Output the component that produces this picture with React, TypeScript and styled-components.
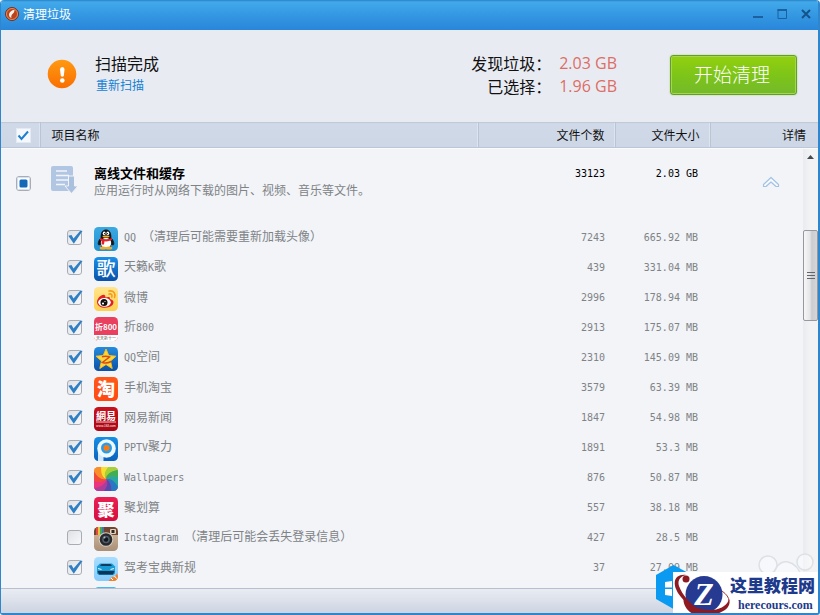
import React, { useState } from 'react';
import styled, { createGlobalStyle, css } from 'styled-components';

const CJK = "'Noto Sans CJK SC', sans-serif";
const MONO = "'DejaVu Sans Mono', 'Noto Sans CJK SC', monospace";

const Global = createGlobalStyle`
  *, *::before, *::after { box-sizing: border-box; }
  body { margin: 0; font-family: ${CJK}; font-size: 12px; color: #111; }
  button, input { font: inherit; margin: 0; }
`;

const Window = styled.div`
  display: flex;
  flex-direction: column;
  height: 100vh;
  overflow: hidden;
  background: #f2f4f8;
  border: solid #2f86cc;
  border-width: 0 2px 2px 1px;
  border-radius: 4px 4px 3px 3px;
  position: relative;
`;

const TitleBar = styled.header`
  display: flex;
  align-items: center;
  flex: none;
  height: 30px;
  padding: 0 0 3px 4px;
  background: linear-gradient(#2a83c8 0, #42a9ea 2px, #3498e2 50%, #2986da 100%);
`;

const WindowTitle = styled.h1`
  flex: 1;
  margin: 0 0 0 4px;
  font-size: 12px;
  line-height: 18px;
  font-weight: 400;
  color: #fff;
`;

const WindowButton = styled.button`
  display: flex;
  align-items: center;
  justify-content: center;
  width: 24px;
  height: 24px;
  padding: 0;
  border: 0;
  background: none;
`;

const Summary = styled.section`
  display: flex;
  align-items: center;
  flex: none;
  height: 92px;
  padding: 0 21px 4px 45px;
  background: #e9ebf3;
`;

const Status = styled.div`
  flex: 1;
  margin-left: 17px;
`;

const StatusTitle = styled.h2`
  margin: 0;
  font-size: 16px;
  line-height: 22px;
  font-weight: 400;
`;

const Rescan = styled.a`
  display: block;
  font-size: 12px;
  line-height: 22px;
  padding-left: 1px;
  color: #1581d2;
  text-decoration: none;
`;

const Totals = styled.dl`
  display: grid;
  grid-template-columns: auto auto;
  column-gap: 8px;
  margin: 2px 53px 0 0;
  line-height: 23px;
  font-size: 16px;
  dt { text-align: right; }
  dd { margin: 0; color: #dc6e64; font-family: 'Open Sans', sans-serif; }
`;

const CleanButton = styled.button`
  width: 127px;
  height: 40px;
  padding: 0 3px 2px 0;
  margin-top: 1px;
  border: 1px solid #62a022;
  border-radius: 3px;
  background: linear-gradient(#93d00e, #7cc41a 55%, #74b92b);
  box-shadow: inset 0 0 0 1px #a5d653, 0 0 2px #a9cc86;
  color: #fff;
  font-size: 19px;
  line-height: 28px;
  font-weight: 300;
`;

const Table = styled.table`
  width: 100%;
  table-layout: fixed;
  border-collapse: collapse;
  border-spacing: 0;
`;

const HeadTable = styled(Table)`
  flex: none;
  background: linear-gradient(#cbd4e1 0, #d0d9e7 2px, #cdd6e5);
  border-top: 1px solid #c0cad9;
  border-bottom: 1px solid #bbc6d6;
`;

const HeadCell = styled.th<{ $align?: 'left' | 'right' | 'center'; $last?: boolean }>`
  height: 25px;
  padding: 0 10px 0 11px;
  text-align: ${(p) => p.$align ?? 'right'};
  font-weight: 400;
  line-height: 18px;
  ${(p) => p.$last && css`
    padding-right: 12px;
  `}
  ${(p) => !p.$last && css`
    border-right: 1px solid #bac4d4;
    box-shadow: inset -1px 0 #dde4ee;
  `}
  ${(p) => p.$align === 'center' && css`
    padding: 0 0 2px 6px;
  `}
`;

const Body = styled.main`
  display: flex;
  flex: 1;
  min-height: 0;
  overflow: hidden;
  border-top: 1px solid #fafbfd;
`;

const ListPane = styled.div`
  flex: 1;
  overflow: hidden;
`;

const GroupRow = styled.tr`
  height: 74px;
  td { padding: 0; vertical-align: top; }
`;

const ItemRow = styled.tr`
  height: 30px;
  color: #808386;
  td { padding: 0; }
`;

const GroupCheckCell = styled.td`
  && { padding: 24px 0 0 15px; }
`;

const GroupInfo = styled.div`
  display: flex;
  gap: 16px;
  padding: 15px 0 0 11px;
  svg { margin-top: 2px; flex: none; }
`;

const GroupName = styled.h3`
  margin: 0;
  font-size: 13px;
  line-height: 18px;
  font-weight: 700;
  color: #000;
`;

const GroupNote = styled.p`
  margin: 0;
  line-height: 16px;
  color: #808386;
  white-space: nowrap;
`;

const NumberCell = styled.td<{ $edge: number; $strong?: boolean }>`
  font-family: ${MONO};
  font-size: 10px;
  line-height: 18px;
  text-align: right;
  white-space: pre;
  && {
    padding-right: ${(p) => p.$edge}px;
    ${(p) => p.$strong && css`padding-top: 16px; color: #000;`}
  }
`;

const CollapseCell = styled.td`
  text-align: center;
  && { padding: 27px 0 0 29px; }
`;

const PlainButton = styled.button`
  display: inline-flex;
  padding: 0;
  border: 0;
  background: none;
`;

const ItemLabel = styled.label`
  display: flex;
  align-items: center;
  padding-left: 66px;
  height: 30px;
  line-height: 18px;
  white-space: nowrap;
  svg { overflow: visible; }
`;

const IconSlot = styled.span`
  display: flex;
  margin: 1px 6px 0 12px;
`;

const ItemName = styled.span`
  padding-bottom: 2px;
  white-space: pre;
`;

const Latin = styled.span`
  font-family: ${MONO};
  font-size: 10px;
`;

const CheckWrap = styled.span`
  position: relative;
  display: inline-flex;
  width: 15px;
  height: 15px;
  vertical-align: middle;
  svg {
    position: absolute;
    inset: 0;
    overflow: visible;
    pointer-events: none;
    display: none;
  }
  input:checked + svg { display: block; }
`;

const ItemCheck = styled.span`
  display: flex;
  padding-bottom: 2px;
`;

const CheckInput = styled.input<{ $plain?: boolean }>`
  appearance: none;
  width: 15px;
  height: 15px;
  border: 1px solid ${(p) => (p.$plain ? '#e4eaf2' : '#a9adb3')};
  border-radius: ${(p) => (p.$plain ? 0 : 3)}px;
  background: ${(p) => (p.$plain ? '#f5f8fc' : 'linear-gradient(135deg, #dfe2e6, #f7f8fa)')};
`;

const Scrollbar = styled.div`
  display: flex;
  flex-direction: column;
  align-items: center;
  flex: none;
  width: 15px;
  background: linear-gradient(90deg, #e9ebee, #f2f3f5 50%);
`;

const ScrollUp = styled(PlainButton)`
  justify-content: center;
  align-items: center;
  width: 15px;
  height: 16px;
`;

const Thumb = styled.div`
  display: flex;
  align-items: center;
  justify-content: center;
  width: 15px;
  height: 91px;
  margin-top: 65px;
  border: 1px solid #95989e;
  border-radius: 2px;
  background: linear-gradient(90deg, #f6f6f7, #e5e6e8 45%, #cbccd0 60%, #d5d6da);
`;

const Footer = styled.footer`
  flex: none;
  height: 25px;
  border-top: 1px solid #b8c0cd;
  background: linear-gradient(#e9ecf3, #cdd4e1);
`;

const Badge = styled.div`
  position: absolute;
  z-index: 2;
  right: -2px;
  bottom: -2px;
`;

const HexMark = styled.svg`
  position: absolute;
  left: -17px;
  top: -7px;
  z-index: -1;
`;

const PawMark = styled.svg`
  position: absolute;
  right: 6px;
  top: -20px;
  z-index: -1;
`;

const BadgePlate = styled.div`
  display: flex;
  width: 147px;
  height: 43px;
  background: #fff;
`;

const BadgeText = styled.div`
  flex: 1;
  color: #1d3a8c;
  white-space: nowrap;
`;

const BadgeName = styled.div`
  font-size: 17px;
  line-height: 26px;
  font-weight: 900;
`;

const BadgeSite = styled.div`
  font-family: 'Liberation Serif', serif;
  font-size: 12px;
  line-height: 14px;
  font-weight: 700;
  padding-left: 8px;
`;

function Check({ label, initial = true, plain, partial }: { label?: string; initial?: boolean; plain?: boolean; partial?: boolean }) {
  const [on, setOn] = useState(initial);
  return (
    <CheckWrap>
      <CheckInput type="checkbox" aria-label={label} checked={on} $plain={plain} onChange={(e) => setOn(e.target.checked)} />
      {partial ? (
        <svg width="15" height="15" viewBox="0 0 15 15"><rect x="1.5" y="1.5" width="12" height="12" rx="1" fill="#fafcff" stroke="#d3e2f2" /><rect x="3.500" y="3.500" width="8" height="8" rx="1.500" fill="#1568b8" /></svg>
      ) : (
        <svg width="15" height="15" viewBox="0 0 15 15">
          {plain
            ? <path d="M2.500 7.500 5.500 11 12 3.500" fill="none" stroke="#1f80cf" strokeWidth="2" />
            : <path d="M1.300 5.800 4.500 5 6.500 8.500 13.500 .5 15.500 1 6.800 13.800Z" fill="#2e7fc4" />}
        </svg>
      )}
    </CheckWrap>
  );
}

type IconKind = 'qq' | 'song' | 'weibo' | 'zhe' | 'qzone' | 'tao' | 'netease' | 'pptv' | 'wall' | 'ju' | 'insta' | 'car' | 'next';

const plates: Record<IconKind, [string, string]> = {
  qq: ['#3aa9e3', '#2491d0'], song: ['#1a90e8', '#0b51a8'], weibo: ['#ffe58c', '#ffd04e'], zhe: ['#e8405e', '#e8405e'],
  qzone: ['#248bdf', '#0b50a6'], tao: ['#ff5a19', '#ff4810'], netease: ['#c8101c', '#a90815'], pptv: ['#168fe5', '#0a62bd'],
  wall: ['#f1a12c', '#e83f62'], ju: ['#ea2052', '#d60e40'], insta: ['#d9c1a1', '#a98f78'], car: ['#a9ddff', '#86cafa'], next: ['#45b8f3', '#2794dd'],
};

const glyphs: Partial<Record<IconKind, { text: string; size: number; weight: number }>> = {
  song: { text: '歌', size: 19, weight: 500 },
  tao: { text: '淘', size: 18, weight: 900 },
  ju: { text: '聚', size: 17, weight: 900 },
};

const wheel = ['#f6e02d', '#a6d039', '#3fae54', '#27a9a0', '#2779c5', '#5a48b0', '#b03c9a', '#ec3580', '#f04b3a', '#f98f2b'];

function wedge(i: number) {
  const point = (angle: number, radius: number) => [12 + Math.cos(angle) * radius, 12 + Math.sin(angle) * radius].map((n) => n.toFixed(2)).join(' ');
  const a = (i * Math.PI) / 5 - 1.8;
  const b = a + Math.PI / 5 + 0.04;
  return `M12 12Q${point(a - 1, 8)} ${point(a, 19)}L${point(b, 19)}Q${point(b - 1, 8)} 12 12Z`;
}

function Artwork({ kind }: { kind: IconKind }) {
  const t = { fontFamily: CJK, fill: '#fff', textAnchor: 'middle' as const };
  switch (kind) {
    case 'qq':
      return <>
        <path d="M7 11C3.800 14 3.800 18 5 18L7.500 16.500M17 11C20.200 14 20.200 18 19 18L16.500 16.500" fill="#15171b" stroke="#15171b" />
        <ellipse cx="12" cy="15" rx="6.300" ry="6.500" fill="#15171b" /><ellipse cx="12" cy="16" rx="5.200" ry="5.200" fill="#fff" />
        <ellipse cx="9" cy="21" rx="3.300" ry="1.500" fill="#f6ac21" /><ellipse cx="15" cy="21" rx="3.300" ry="1.500" fill="#f6ac21" />
        <path d="M6.700 11C5.500-.5 18.500-.5 17.300 11Z" fill="#15171b" /><ellipse cx="10.200" cy="6.300" rx="1.400" ry="1.900" fill="#fff" /><ellipse cx="13.800" cy="6.300" rx="1.400" ry="1.900" fill="#fff" />
        <circle cx="10.700" cy="6.600" r=".7" /><circle cx="13.300" cy="6.600" r=".7" /><ellipse cx="12" cy="9.500" rx="3.500" ry="1.100" fill="#f8b321" />
        <path d="M6 11Q12 13.500 18 11L18 13Q14 14.800 10.500 14.300L10 17.500H7.500L7.800 13.900 6 13Z" fill="#e32126" />
      </>;
    case 'weibo':
      return <>
        <path d="M3 15C3 11 8 6.500 10.500 8 12 9 11 10.500 11.500 10.500 14 9.500 16.500 9.500 16 12 19.500 13 20.500 15 18.500 18 14 22.500 3 21.500 3 15Z" fill="#e02228" />
        <ellipse cx="10.500" cy="15.300" rx="6.300" ry="4.400" fill="#fff" /><circle cx="10" cy="15.500" r="3.500" fill="#17100d" /><circle cx="9" cy="16.500" r="1.100" fill="#fff" /><circle cx="11" cy="14.500" r=".6" fill="#fff" />
        <path d="M15 4C19.500 3 22 7 20.500 10.500M15 7C17.500 6.500 18.500 8 17.800 10" fill="none" stroke="#f49b1e" strokeWidth="1.600" strokeLinecap="round" />
      </>;
    case 'zhe':
      return <><rect y="18" width="24" height="6" fill="#fff" /><text x="12" y="12.500" fontSize="8" fontWeight="700" {...t}>折800</text><text x="12" y="22.500" fontSize="4" {...t} fill="#444">天天折十一</text></>;
    case 'qzone':
      return <><path d="M12 2 14.800 8.500 22 9.200 16.500 14 18.200 21.500 12 17.500 5.800 21.500 7.500 14 2 9.200 9.200 8.500Z" fill="#ffd73a" stroke="#f8bd1c" strokeLinejoin="round" /><path d="M8 9.800Q12 8.800 15.500 10L8.500 15.500Q13 16.800 17 14.500" fill="none" stroke="#d94c18" strokeWidth="1.500" /></>;
    case 'netease':
      return <><text x="12" y="12.500" fontSize="10" fontWeight="700" {...t}>網易</text><path d="M2 15H22" stroke="#fff" strokeWidth=".8" /><text x="12" y="19.500" fontSize="3" {...t}>www.163.com</text></>;
    case 'pptv':
      return <><path d="M4 10V24H9.500V18" fill="#cfe8fb" /><circle cx="12.500" cy="11.500" r="9.300" fill="#eef8ff" /><circle cx="12.500" cy="11" r="5.500" fill="#269fe8" /><circle cx="12.500" cy="11" r="3" fill="#ff7810" /></>;
    case 'wall':
      return <>{wheel.map((color, i) => <path key={color} d={wedge(i)} fill={color} />)}</>;
    case 'insta':
      return <><rect width="24" height="8" fill="#71452f" /><path d="M3 0V8" stroke="#e14c42" strokeWidth="2" /><path d="M5 0V8" stroke="#eac33f" strokeWidth="2" /><path d="M7 0V8" stroke="#46a85c" strokeWidth="2" /><path d="M9 0V8" stroke="#3e83c5" strokeWidth="1.500" /><rect x="16" y="2" width="6" height="5" rx="1" fill="#e0d5c4" /><rect x="17.500" y="3" width="3" height="3" fill="#33251f" /><circle cx="12" cy="12.500" r="7.300" fill="#d4cdc3" /><circle cx="12" cy="12.500" r="6.300" fill="#27292d" /><circle cx="12" cy="12.500" r="3.800" fill="#515c69" /><circle cx="12" cy="12.500" r="2.200" fill="#11151d" /><circle cx="10.500" cy="10.500" r="1" fill="#aeb9c5" /></>;
    case 'car':
      return <><path d="M3 9.500 6 6.500H18L21 9.500V16.500L19 18H5L3 16.500Z" fill="#159bd5" /><path d="M6 9 7.500 7H16.500L18 9Z" fill="#123d60" /><path d="M3.500 14H20.500L19 17.500H5Z" fill="#0c3557" /><path d="M4 11.500 7.500 12.500M20 11.500 16.500 12.500" stroke="#dff7ff" strokeWidth="1.200" /><path d="M14.500 24 18.500 19.500 20 20.500 23 16.500 24 19V24Z" fill="#ee822c" /><path d="M17 21 19 23M20.500 19 22.500 21.500" stroke="#fff" /></>;
    default:
      return null;
  }
}

function AppIcon({ kind }: { kind: IconKind }) {
  const [from, to] = plates[kind];
  const glyph = glyphs[kind];
  return (
    <svg width="24" height="24" viewBox="0 0 24 24" aria-hidden="true">
      <defs>
        <linearGradient id={`plate-${kind}`} x2="0" y2="1"><stop stopColor={from} /><stop offset="1" stopColor={to} /></linearGradient>
        <clipPath id={`clip-${kind}`}><rect width="24" height="24" rx="4.500" /></clipPath>
      </defs>
      {glyph ? (
        <>
          <rect width="24" height="24" rx="4.500" fill={`url(#plate-${kind})`} />
          <text x="12" y="18.500" textAnchor="middle" fontFamily={CJK} fontSize={glyph.size} fontWeight={glyph.weight} fill="#fff">{glyph.text}</text>
        </>
      ) : (
        <g clipPath={`url(#clip-${kind})`}><rect width="24" height="24" fill={`url(#plate-${kind})`} /><Artwork kind={kind} /></g>
      )}
    </svg>
  );
}

interface Item { icon: IconKind; name: string; count: string; size: string; off?: boolean }

const items: Item[] = [
  { icon: 'qq', name: 'QQ （清理后可能需要重新加载头像）', count: '7243', size: '665.92 MB' },
  { icon: 'song', name: '天籁K歌', count: '439', size: '331.04 MB' },
  { icon: 'weibo', name: '微博', count: '2996', size: '178.94 MB' },
  { icon: 'zhe', name: '折800', count: '2913', size: '175.07 MB' },
  { icon: 'qzone', name: 'QQ空间', count: '2310', size: '145.09 MB' },
  { icon: 'tao', name: '手机淘宝', count: '3579', size: '63.39 MB' },
  { icon: 'netease', name: '网易新闻', count: '1847', size: '54.98 MB' },
  { icon: 'pptv', name: 'PPTV聚力', count: '1891', size: '53.3 MB' },
  { icon: 'wall', name: 'Wallpapers', count: '876', size: '50.87 MB' },
  { icon: 'ju', name: '聚划算', count: '557', size: '38.18 MB' },
  { icon: 'insta', name: 'Instagram （清理后可能会丢失登录信息）', count: '427', size: '28.5 MB', off: true },
  { icon: 'car', name: '驾考宝典新规', count: '37', size: '27.09 MB' },
  { icon: 'next', name: '', count: '', size: '' },
];

function MixedText({ text }: { text: string }) {
  return <>{text.split(/([\x20-\x7e]+)/).filter(Boolean).map((part, i) => (/^[\x20-\x7e]/.test(part) ? <Latin key={i}>{part}</Latin> : part))}</>;
}

function Columns({ detail }: { detail: number }) {
  return <colgroup><col width="39" /><col /><col width="137" /><col width="95" /><col width={detail} /></colgroup>;
}

export default function App() {
  return (
    <>
      <Global />
      <Window>
        <TitleBar>
          <svg width="14" height="14" viewBox="0 0 14 14" aria-hidden="true">
            <circle cx="7" cy="7" r="6.500" fill="#b8431d" stroke="#6f3427" /><circle cx="7" cy="7" r="5.500" fill="none" stroke="#e98b5a" />
            <path d="M9.500 3C7 3 4 5 4 8Q4 10.500 6.500 11 5.500 8.500 8 6.500Q9.500 5.500 9.500 3Z" fill="#fff3ea" />
          </svg>
          <WindowTitle>清理垃圾</WindowTitle>
          <WindowButton aria-label="最小化"><svg width="10" height="10"><path d="M0 8H10" stroke="#1b609f" strokeWidth="2" /></svg></WindowButton>
          <WindowButton aria-label="最大化"><svg width="10" height="10"><path d="M1 .5V9.500H9.500V.5" fill="none" stroke="#1b609f" /><path d="M.5 1H10" stroke="#1b609f" strokeWidth="2" /></svg></WindowButton>
          <WindowButton aria-label="关闭"><svg width="10" height="10"><path d="M1 1 9 9M9 1 1 9" stroke="#14528c" strokeWidth="2" /></svg></WindowButton>
        </TitleBar>

        <Summary>
          <svg width="32" height="32" viewBox="0 0 32 32" aria-hidden="true">
            <defs><linearGradient id="alert" x2="0" y2="1"><stop stopColor="#ff9a12" /><stop offset="1" stopColor="#f96f02" /></linearGradient></defs>
            <circle cx="16" cy="16" r="14.300" fill="url(#alert)" />
            <path d="M14 11.500Q14 9 16.300 9 18.600 9 18.500 11.500L17.800 18Q16.300 19.500 14.800 18Z" fill="#fff" /><circle cx="16.300" cy="22.500" r="2.300" fill="#fff" />
          </svg>
          <Status>
            <StatusTitle>扫描完成</StatusTitle>
            <Rescan href="#rescan">重新扫描</Rescan>
          </Status>
          <Totals>
            <dt>发现垃圾：</dt><dd>2.03 GB</dd>
            <dt>已选择：</dt><dd>1.96 GB</dd>
          </Totals>
          <CleanButton>开始清理</CleanButton>
        </Summary>

        <HeadTable>
          <Columns detail={108} />
          <thead>
            <tr>
              <HeadCell $align="center"><Check plain label="全选" /></HeadCell>
              <HeadCell $align="left">项目名称</HeadCell>
              <HeadCell>文件个数</HeadCell>
              <HeadCell>文件大小</HeadCell>
              <HeadCell $last>详情</HeadCell>
            </tr>
          </thead>
        </HeadTable>

        <Body>
          <ListPane>
            <Table>
              <Columns detail={93} />
              <tbody>
                <GroupRow>
                  <GroupCheckCell><Check partial label="离线文件和缓存" /></GroupCheckCell>
                  <td>
                    <GroupInfo>
                      <svg width="27" height="28" viewBox="0 0 27 28" aria-hidden="true">
                        <path d="M2 0H20Q22 0 22 2V25H2Q0 25 0 23V2Q0 0 2 0Z" fill="#b1c6e3" />
                        <path d="M5 5H16M5 9.500H18M5 14H18M5 18.500H14" stroke="#f2f5fa" strokeWidth="1.300" />
                        <path d="M17.500 10H23.500V20H27L20.500 27.500 14 20H17.500Z" fill="#a9c0df" stroke="#f2f4f8" strokeWidth="1" />
                      </svg>
                      <div>
                        <GroupName>离线文件和缓存</GroupName>
                        <GroupNote>应用运行时从网络下载的图片、视频、音乐等文件。</GroupNote>
                      </div>
                    </GroupInfo>
                  </td>
                  <NumberCell $edge={10} $strong>33123</NumberCell>
                  <NumberCell $edge={12} $strong>2.03 GB</NumberCell>
                  <CollapseCell>
                    <PlainButton aria-label="收起">
                      <svg width="18" height="14" viewBox="0 0 18 14"><path d="M9 1.500 16.500 8.500V10.500H14L9 6 4 10.500H1.500V8.500Z" fill="#f7fafd" stroke="#a3c2e4" strokeWidth="1.200" strokeLinejoin="round" /></svg>
                    </PlainButton>
                  </CollapseCell>
                </GroupRow>
                {items.map((item) => (
                  <ItemRow key={item.icon}>
                    <td colSpan={2}>
                      <ItemLabel>
                        <ItemCheck><Check initial={!item.off} /></ItemCheck>
                        <IconSlot><AppIcon kind={item.icon} /></IconSlot>
                        <ItemName><MixedText text={item.name} /></ItemName>
                      </ItemLabel>
                    </td>
                    <NumberCell $edge={10}>{item.count}</NumberCell>
                    <NumberCell $edge={12}>{item.size}</NumberCell>
                    <td />
                  </ItemRow>
                ))}
              </tbody>
            </Table>
          </ListPane>
          <Scrollbar>
            <ScrollUp aria-label="向上滚动"><svg width="7" height="4"><path d="M0 4 3.500 0 7 4Z" fill="#444a52" /></svg></ScrollUp>
            <Thumb><svg width="8" height="8"><path d="M0 .5H8M0 3.500H8M0 6.500H8" stroke="#62666c" /></svg></Thumb>
          </Scrollbar>
        </Body>
        <Footer />

        <Badge>
          <HexMark width="36" height="46" viewBox="0 0 36 46" aria-hidden="true">
            <path d="M17.500 0 36 10V34L17.500 44 0 34V10Z" fill="#0a9af2" />
            <path d="M9 17 16 16V22.500H9ZM17.500 15.700 28 14V22.500H17.500ZM9 24H16V31L9 30ZM17.500 24H28V33L17.500 31.300Z" fill="#fff" />
          </HexMark>
          <PawMark width="58" height="26" viewBox="0 0 58 26" aria-hidden="true">
            <g fill="#fff" fillOpacity=".4" stroke="#dde0e4" strokeWidth="1.500"><circle cx="12" cy="13" r="9" /><circle cx="49" cy="10" r="8" /><path d="M16 26Q21 8 32 10 42 12 46 26Z" /></g>
          </PawMark>
          <BadgePlate>
            <svg width="57" height="43" viewBox="0 0 57 43" aria-hidden="true">
              <circle cx="31" cy="22.500" r="18.500" fill="#263a92" />
              <text x="31" y="33" textAnchor="middle" fontFamily="Liberation Serif, serif" fontWeight="700" fontStyle="italic" fontSize="32" fill="#fff">Z</text>
              <path d="M13 3C5 2-1 7 3 17 7 27 18 35 26 38 18 32 9 23 6 14 4 8 8 4 13 3Z" fill="#8e1a22" />
              <circle cx="13" cy="7" r="3.500" fill="#8e1a22" />
              <path d="M11 24C14 33 26 39 40 38 49 37 55 32 56 27 59 35 50 41 42 42H20C13 38 9 31 11 24Z" fill="#8e1a22" />
              <path d="M49 19Q56 24 56 29" fill="none" stroke="#a8343b" />
            </svg>
            <BadgeText>
              <BadgeName>这里教程网</BadgeName>
              <BadgeSite>herecours.com</BadgeSite>
            </BadgeText>
          </BadgePlate>
        </Badge>
      </Window>
    </>
  );
}
